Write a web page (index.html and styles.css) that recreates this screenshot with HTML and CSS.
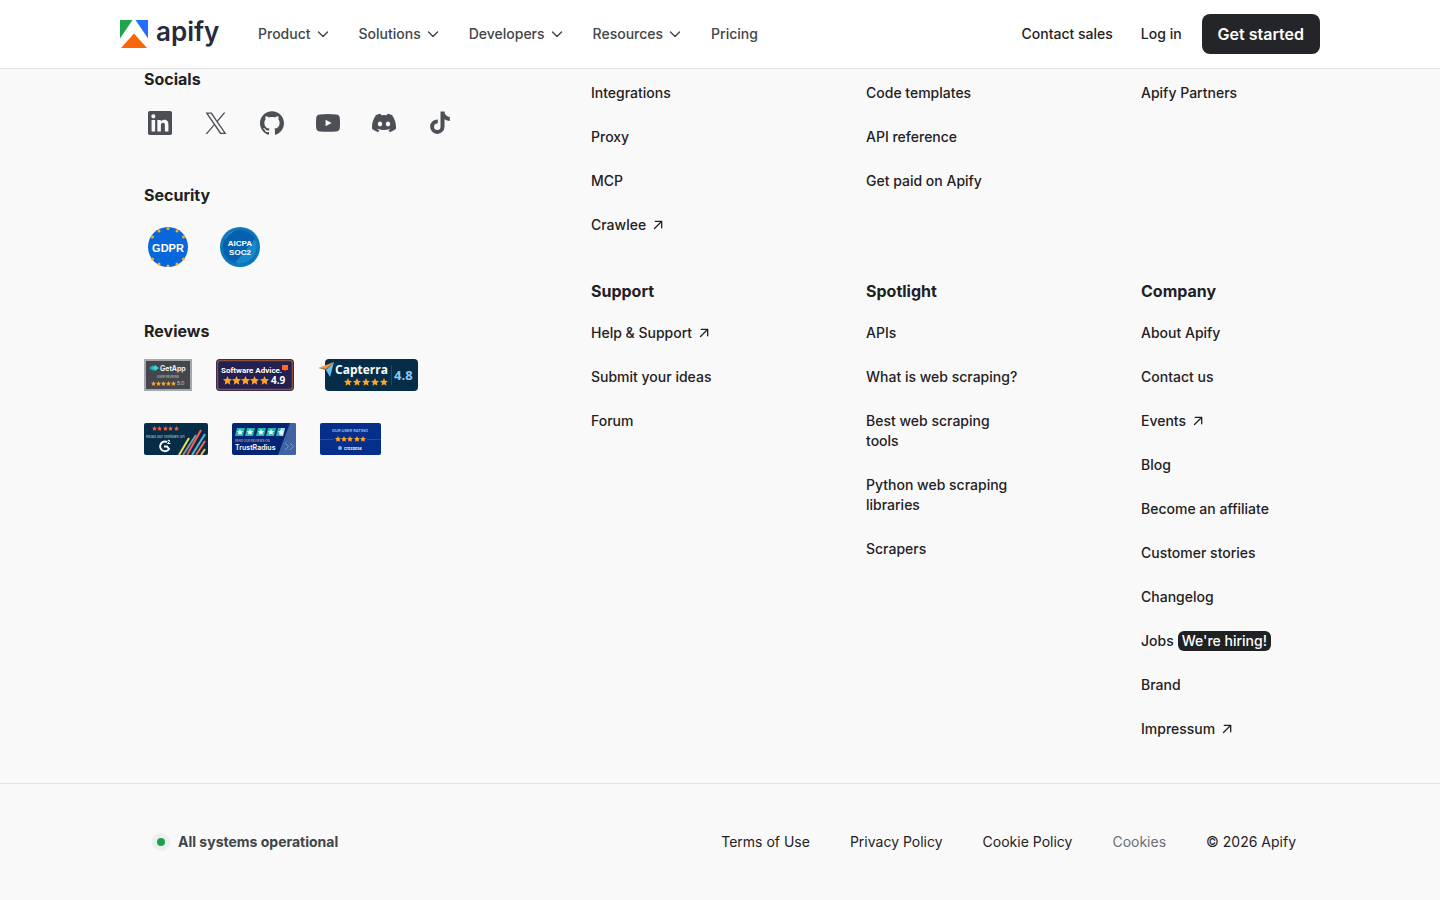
FILE: index.html
```html
<!DOCTYPE html>
<html lang="en">
<head>
<meta charset="utf-8">
<meta name="viewport" content="width=device-width, initial-scale=1">
<title>Apify</title>
<link rel="stylesheet" href="styles.css">
</head>
<body>
<svg class="sprite" aria-hidden="true">
  <symbol id="chevron" viewBox="0 0 20 20"><path d="M5.5 8l4.5 4.5L14.500 8" fill="none" stroke="currentColor" stroke-width="1.400" stroke-linecap="round" stroke-linejoin="round"/></symbol>
  <symbol id="arrow" viewBox="0 0 16 16"><path d="M4.500 11.500l7-7M5.200 4.300h6.500v6.500" fill="none" stroke="currentColor" stroke-width="1.300" stroke-linecap="round" stroke-linejoin="round"/></symbol>
  <symbol id="star" viewBox="0 0 10 10"><path d="M5 0l1.500 3.300 3.500.4-2.600 2.400.7 3.600L5 7.900 1.900 9.700l.7-3.600L0 3.700l3.500-.4z"/></symbol>
</svg>

<header class="header">
  <div class="header-inner">
    <a class="logo" href="#">
      <svg class="logo-mark" viewBox="0 0 28 28" aria-hidden="true"><path d="M0 0h12.500L0 18.500z" fill="#20a34e"/><path d="M15.500 0H28v18.500z" fill="#246dff"/><path d="M1 28l13-14.500L27 28z" fill="#f86606"/></svg>
      <span class="logo-text">apify</span>
    </a>
    <nav class="nav" aria-label="Main">
      <button class="nav-item" type="button">Product<svg class="chevron" aria-hidden="true"><use href="#chevron"/></svg></button>
      <button class="nav-item" type="button">Solutions<svg class="chevron" aria-hidden="true"><use href="#chevron"/></svg></button>
      <button class="nav-item" type="button">Developers<svg class="chevron" aria-hidden="true"><use href="#chevron"/></svg></button>
      <button class="nav-item" type="button">Resources<svg class="chevron" aria-hidden="true"><use href="#chevron"/></svg></button>
      <a class="nav-item" href="#">Pricing</a>
    </nav>
    <div class="account">
      <a class="account-link" href="#">Contact sales</a>
      <a class="account-link" href="#">Log in</a>
      <a class="cta" href="#">Get started</a>
    </div>
  </div>
</header>

<footer class="footer">
  <div class="footer-main">
    <div class="about">
      <section class="about-block">
        <h2 class="heading">Socials</h2>
        <div class="socials">
          <a class="social" href="#" aria-label="LinkedIn"><svg viewBox="0 0 24 24"><path d="M20.447 20.452h-3.554v-5.569c0-1.328-.027-3.037-1.852-3.037-1.853 0-2.136 1.445-2.136 2.939v5.667H9.351V9h3.414v1.561h.046c.477-.9 1.637-1.850 3.370-1.850 3.601 0 4.267 2.370 4.267 5.455v6.286zM5.337 7.433a2.062 2.062 0 0 1-2.063-2.065 2.064 2.064 0 1 1 2.063 2.065zm1.782 13.019H3.555V9h3.564v11.452zM22.225 0H1.771C.792 0 0 .774 0 1.729v20.542C0 23.227.792 24 1.771 24h20.451C23.200 24 24 23.227 24 22.271V1.729C24 .774 23.200 0 22.222 0h.003z"/></svg></a>
          <a class="social" href="#" aria-label="X"><svg viewBox="0 0 24 24"><path fill-rule="evenodd" d="M13.900 10.500L21.500 1.500h-1.700l-6.700 7.900-5.300-7.900H1.500l8.200 12-8.200 9.500h1.700l7.200-8.400 5.700 8.400h6.300zM4 2.800h2.900L20 21.700h-2.900z"/></svg></a>
          <a class="social" href="#" aria-label="GitHub"><svg viewBox="0 0 24 24"><path d="M12 .297c-6.630 0-12 5.373-12 12 0 5.303 3.438 9.800 8.205 11.385.6.113.82-.258.82-.577 0-.285-.010-1.040-.015-2.040-3.338.724-4.042-1.610-4.042-1.610C4.422 18.070 3.633 17.700 3.633 17.700c-1.087-.744.084-.729.084-.729 1.205.084 1.838 1.236 1.838 1.236 1.070 1.835 2.809 1.305 3.495.998.108-.776.417-1.305.76-1.605-2.665-.3-5.466-1.332-5.466-5.930 0-1.310.465-2.380 1.235-3.220-.135-.303-.54-1.523.105-3.176 0 0 1.005-.322 3.300 1.230.96-.267 1.980-.399 3-.405 1.020.006 2.040.138 3 .405 2.280-1.552 3.285-1.230 3.285-1.230.645 1.653.24 2.873.12 3.176.765.84 1.230 1.910 1.230 3.220 0 4.610-2.805 5.625-5.475 5.920.42.36.81 1.096.81 2.220 0 1.606-.015 2.896-.015 3.286 0 .315.210.69.825.57C20.565 22.092 24 17.592 24 12.297c0-6.627-5.373-12-12-12"/></svg></a>
          <a class="social" href="#" aria-label="YouTube"><svg viewBox="0 0 24 24"><path fill-rule="evenodd" d="M4 3.400Q12 2.800 20 3.400 23.600 3.700 23.800 7q.4 5 0 10-.3 3.200-3.800 3.500-8 .6-16 0Q.5 20.200.2 17q-.4-5 0-10Q.4 3.700 4 3.400zM9.600 8.700v6.600l6-3.300z"/></svg></a>
          <a class="social" href="#" aria-label="Discord"><svg viewBox="0 0 24 24"><path d="M20.317 4.370a19.791 19.791 0 0 0-4.885-1.515.074.074 0 0 0-.079.037c-.210.375-.444.864-.608 1.250a18.270 18.270 0 0 0-5.487 0 12.640 12.640 0 0 0-.617-1.250.077.077 0 0 0-.079-.037A19.736 19.736 0 0 0 3.677 4.370a.07.07 0 0 0-.032.027C.533 9.046-.32 13.580.099 18.058a.082.082 0 0 0 .031.057 19.900 19.900 0 0 0 5.993 3.030.078.078 0 0 0 .084-.028c.462-.63.874-1.295 1.226-1.994a.076.076 0 0 0-.041-.106 13.107 13.107 0 0 1-1.872-.892.077.077 0 0 1-.008-.128c.126-.094.252-.192.372-.292a.074.074 0 0 1 .077-.010c3.928 1.793 8.180 1.793 12.062 0a.074.074 0 0 1 .078.010c.12.099.246.198.373.292a.077.077 0 0 1-.006.127 12.299 12.299 0 0 1-1.873.892.077.077 0 0 0-.041.107c.36.698.772 1.362 1.225 1.993a.076.076 0 0 0 .084.028 19.839 19.839 0 0 0 6.002-3.030.077.077 0 0 0 .032-.054c.5-5.177-.838-9.674-3.549-13.660a.061.061 0 0 0-.031-.030zM8.020 15.330c-1.183 0-2.157-1.085-2.157-2.419s.956-2.419 2.157-2.419c1.210 0 2.176 1.096 2.157 2.420 0 1.333-.956 2.418-2.157 2.418zm7.975 0c-1.183 0-2.157-1.085-2.157-2.419s.955-2.419 2.157-2.419c1.210 0 2.176 1.096 2.157 2.420 0 1.333-.946 2.418-2.157 2.418z"/></svg></a>
          <a class="social" href="#" aria-label="TikTok"><svg viewBox="0 0 24 24"><path d="M16.500.5h-4v15.300a3.200 3.200 0 1 1-2.700-3.200V8.500a7.200 7.200 0 1 0 6.700 7.200V8.200A9.300 9.300 0 0 0 21.800 9.900V5.900A5.400 5.400 0 0 1 16.500.5z"/></svg></a>
        </div>
      </section>

      <section class="about-block">
        <h2 class="heading">Security</h2>
        <div class="seals">
          <svg class="seal" viewBox="0 0 40 40" role="img" aria-label="GDPR">
            <circle cx="20" cy="20" r="20" fill="#0967dc"/>
            <g fill="#f5ae25"><circle cx="20" cy="1.500" r="1.500"/><circle cx="11" cy="4" r="1.500"/><circle cx="29" cy="4" r="1.500"/><circle cx="4.500" cy="10" r="1.500"/><circle cx="35.500" cy="10" r="1.500"/><circle cx="4.500" cy="32" r="1.500"/><circle cx="35.500" cy="32" r="1.500"/><circle cx="11" cy="37" r="1.500"/><circle cx="29" cy="37" r="1.500"/><circle cx="20" cy="39" r="1.500"/></g>
            <text class="seal-gdpr" x="20" y="25">GDPR</text>
          </svg>
          <svg class="seal" viewBox="0 0 40 40" role="img" aria-label="AICPA SOC2">
            <circle cx="20" cy="20" r="20" fill="#0879bc"/><circle cx="20" cy="20" r="17" fill="#0561ae"/>
            <path d="M15 36L35 12a17 17 0 0 1-20 24z" fill="#1787c8"/>
            <path d="M5 12A17 17 0 0 1 13 4.500" fill="none" stroke="#3597d0"/>
            <text class="seal-soc" x="20" y="19">AICPA</text><text class="seal-soc" x="20" y="28">SOC2</text>
          </svg>
        </div>
      </section>

      <section class="about-block">
        <h2 class="heading">Reviews</h2>
        <div class="reviews">
          <a href="#" aria-label="GetApp"><svg class="review" width="48" height="32" viewBox="0 0 48 32">
            <rect x="1" y="1" width="46" height="30" fill="#43474d" stroke="#a5a7aa" stroke-width="2"/>
            <path d="M5 9l4-3v6z" fill="#1fa7b8"/><path d="M8 9l3-3 4 3-4 3z" fill="#36d1d2"/>
            <text class="badge-bold" x="16" y="12" font-size="7">GetApp</text>
            <text class="badge-soft" x="24" y="19" font-size="3" text-anchor="middle">USER REVIEWS</text>
            <g fill="#fba52a"><use href="#star" x="7" y="22" width="5" height="5"/><use href="#star" x="12" y="22" width="5" height="5"/><use href="#star" x="17" y="22" width="5" height="5"/><use href="#star" x="22" y="22" width="5" height="5"/><use href="#star" x="27" y="22" width="5" height="5"/></g>
            <text class="badge-soft" x="33" y="26" font-size="5">5.0</text>
          </svg></a>
          <a href="#" aria-label="Software Advice"><svg class="review" width="78" height="32" viewBox="0 0 78 32">
            <rect width="78" height="32" rx="4" fill="#24204f"/><rect x="1.500" y="1.500" width="75" height="29" rx="3" fill="none" stroke="#88513d" stroke-width="1.500"/>
            <text class="badge-roboto" x="5" y="14" font-size="8">Software Advice.</text>
            <path d="M66 6h6v5h-2l-1 1-1-1h-2z" fill="#ff681d"/>
            <g fill="#fba52a"><use href="#star" x="7" y="17" width="9" height="9"/><use href="#star" x="16" y="17" width="9" height="9"/><use href="#star" x="25" y="17" width="9" height="9"/><use href="#star" x="34" y="17" width="9" height="9"/><use href="#star" x="44" y="17" width="9" height="9"/></g>
            <text class="badge-open" x="55" y="25" font-size="10">4.9</text>
          </svg></a>
          <a href="#" aria-label="Capterra"><svg class="review" width="100" height="32" viewBox="0 0 100 32">
            <rect x="7" width="93" height="32" rx="4" fill="#062d47"/>
            <path d="M0 9l16-6-8 8z" fill="#f7953e"/><path d="M1 9l7 1 8-7-7 8z" fill="#243b51"/><path d="M16 3l-4 15-4-7z" fill="#66c1ed"/>
            <text class="badge-open" x="17" y="15" font-size="12">Capterra</text>
            <g fill="#fba52a"><use href="#star" x="26" y="19" width="8" height="8"/><use href="#star" x="35" y="19" width="8" height="8"/><use href="#star" x="44" y="19" width="8" height="8"/><use href="#star" x="53" y="19" width="8" height="8"/><use href="#star" x="62" y="19" width="8" height="8"/></g>
            <path d="M73.500 6v20" stroke="#184b6a"/>
            <text class="badge-open" x="76" y="21" font-size="13" fill="#70c1f2">4.8</text>
          </svg></a>
        </div>
        <div class="reviews">
          <a href="#" aria-label="G2"><svg class="review" width="64" height="32" viewBox="0 0 64 32">
            <clipPath id="g2-clip"><rect width="64" height="32" rx="2"/></clipPath>
            <g clip-path="url(#g2-clip)"><rect width="64" height="32" fill="#062d47"/>
            <path d="M35 32l10-17" stroke="#f6df4d" stroke-width="2"/><path d="M39 32l13-20" stroke="#7e9aa9" stroke-width="2"/><path d="M43 32L57 7" stroke="#ff5c4b" stroke-width="2"/><path d="M48 32l13-21" stroke="#63b4db" stroke-width="2"/><path d="M52 32l9-14" stroke="#ff6849" stroke-width="2"/><path d="M57 32l4-6" stroke="#f6c54d" stroke-width="2"/></g>
            <g fill="#ff5c38"><use href="#star" x="8" y="3" width="5" height="5"/><use href="#star" x="13" y="3" width="5" height="5"/><use href="#star" x="19" y="3" width="5" height="5"/><use href="#star" x="24" y="3" width="5" height="5"/><use href="#star" x="30" y="3" width="5" height="5"/></g>
            <text class="badge-soft" x="2" y="15" font-size="4">Read our reviews on</text>
            <path d="M23 19a4.800 4.800 0 1 0 2 7l-2-2.500h-3" fill="none" stroke="#fff" stroke-width="2"/><path d="M23.500 18q2-2 2 0 0 1-2 2.500h3" fill="none" stroke="#fff"/>
          </svg></a>
          <a href="#" aria-label="TrustRadius"><svg class="review" width="64" height="32" viewBox="0 0 64 32">
            <rect width="64" height="32" rx="2" fill="#052474"/><path d="M58 0h4q2 0 2 2v28q0 2-2 2H46z" fill="#4263a2"/>
            <g fill="#23b9a6"><path d="M5 5h8l-2 8H3zM15 5h8l-2 8h-8zM26 5h8l-2 8h-8zM36 5h8l-2 8h-8zM46 5h7l-2 8h-7z"/></g><path d="M49 5h4l-2 8h-3z" fill="#b8d2e8"/>
            <g fill="#fff"><use href="#star" x="5" y="6" width="6" height="6"/><use href="#star" x="15" y="6" width="6" height="6"/><use href="#star" x="26" y="6" width="6" height="6"/><use href="#star" x="36" y="6" width="6" height="6"/><use href="#star" x="46" y="6" width="6" height="6"/></g>
            <text class="badge-soft" x="3" y="19" font-size="3">READ OUR REVIEWS ON</text>
            <text class="badge-bold" x="3" y="27" font-size="7">TrustRadius</text>
            <path d="M53 20l3.500 3.500L53 27M58 20l3.500 3.500L58 27" fill="none" stroke="#5fa1eb"/>
          </svg></a>
          <a href="#" aria-label="Crozdesk"><svg class="review" width="61" height="32" viewBox="0 0 61 32">
            <rect width="61" height="32" rx="2" fill="#062f8c"/><path d="M0 16.500h14M47 16.500h14" stroke="#164eb6"/>
            <text class="badge-bold" x="30" y="9" font-size="4" text-anchor="middle" fill="#b9d1f7">OUR USER RATING</text>
            <g fill="#fba52a"><use href="#star" x="15" y="13" width="6" height="6"/><use href="#star" x="21" y="13" width="6" height="6"/><use href="#star" x="27" y="13" width="6" height="6"/><use href="#star" x="34" y="13" width="6" height="6"/><use href="#star" x="40" y="13" width="6" height="6"/></g>
            <circle cx="20" cy="25" r="2" fill="#72c1ff"/><text class="badge-bold" x="24" y="27" font-size="4">crozdesk</text>
          </svg></a>
        </div>
      </section>
    </div>

    <nav class="columns" aria-label="Footer">
      <ul class="links">
        <li><a href="#">Integrations</a></li>
        <li><a href="#">Proxy</a></li>
        <li><a href="#">MCP</a></li>
        <li><a href="#">Crawlee<svg class="arrow" aria-hidden="true"><use href="#arrow"/></svg></a></li>
      </ul>
      <ul class="links">
        <li><a href="#">Code templates</a></li>
        <li><a href="#">API reference</a></li>
        <li><a href="#">Get paid on Apify</a></li>
      </ul>
      <ul class="links">
        <li><a href="#">Apify Partners</a></li>
      </ul>
      <section class="group">
        <h2 class="heading">Support</h2>
        <ul class="links">
          <li><a href="#">Help &amp; Support<svg class="arrow" aria-hidden="true"><use href="#arrow"/></svg></a></li>
          <li><a href="#">Submit your ideas</a></li>
          <li><a href="#">Forum</a></li>
        </ul>
      </section>
      <section class="group">
        <h2 class="heading">Spotlight</h2>
        <ul class="links">
          <li><a href="#">APIs</a></li>
          <li><a href="#">What is web scraping?</a></li>
          <li><a href="#">Best web scraping tools</a></li>
          <li><a href="#">Python web scraping libraries</a></li>
          <li><a href="#">Scrapers</a></li>
        </ul>
      </section>
      <section class="group">
        <h2 class="heading">Company</h2>
        <ul class="links">
          <li><a href="#">About Apify</a></li>
          <li><a href="#">Contact us</a></li>
          <li><a href="#">Events<svg class="arrow" aria-hidden="true"><use href="#arrow"/></svg></a></li>
          <li><a href="#">Blog</a></li>
          <li><a href="#">Become an affiliate</a></li>
          <li><a href="#">Customer stories</a></li>
          <li><a href="#">Changelog</a></li>
          <li><a class="jobs" href="#">Jobs<span class="tag">We're hiring!</span></a></li>
          <li><a href="#">Brand</a></li>
          <li><a href="#">Impressum<svg class="arrow" aria-hidden="true"><use href="#arrow"/></svg></a></li>
        </ul>
      </section>
    </nav>
  </div>

  <div class="legal">
    <div class="legal-inner">
      <a class="status" href="#"><span class="status-dot"></span>All systems operational</a>
      <div class="legal-links">
        <a href="#">Terms of Use</a>
        <a href="#">Privacy Policy</a>
        <a href="#">Cookie Policy</a>
        <button class="cookies" type="button">Cookies</button>
        <span>© 2026 Apify</span>
      </div>
    </div>
  </div>
</footer>
</body>
</html>
```
FILE: styles.css
```css
* { box-sizing: border-box; }
body {
  margin: 0;
  background: #f9f9f9;
  color: #1f2123;
  font: 500 14px/20px Inter, "Liberation Sans", sans-serif;
}
a { color: inherit; text-decoration: none; }
button { padding: 0; border: 0; background: none; color: inherit; font: inherit; cursor: pointer; }
.sprite { display: block; width: 0; height: 0; }

.header { position: sticky; top: 0; background: #fff; border-bottom: 1px solid #e2e3e5; }
.header-inner {
  display: flex;
  align-items: center;
  max-width: 1200px;
  margin: 0 auto;
  padding: 14px 0;
}
.logo { display: flex; align-items: flex-start; gap: 8px; width: 138px; }
.logo-mark { width: 28px; height: 28px; }
.logo-text { color: #272a3a; font-size: 26px; font-weight: 600; line-height: 24px; }
.nav { display: flex; gap: 26px; color: #414549; }
.nav-item { display: flex; align-items: center; gap: 2px; }
.chevron { width: 20px; height: 20px; }
.account { display: flex; align-items: center; gap: 28px; margin-left: auto; }
.cta {
  margin-left: -8px;
  padding: 10px 16px;
  border-radius: 8px;
  background: #242529;
  color: #fff;
  font-size: 16px;
  font-weight: 600;
}

.footer-main {
  display: grid;
  grid-template-columns: minmax(0, 1fr) minmax(0, 705px);
  max-width: 1152px;
  margin: 0 auto;
  padding-bottom: 44px;
}
.heading { margin: 0; font-size: 16px; font-weight: 700; line-height: 20px; }
.about { display: flex; flex-direction: column; gap: 46px; }
.socials { display: flex; gap: 24px; margin-top: 18px; color: #4c5056; }
.social { padding: 4px; }
.social svg { display: block; width: 24px; height: 24px; fill: currentColor; }
.seals { display: flex; gap: 32px; padding: 22px 4px 8px; }
.seal { width: 40px; height: 40px; }
.seal text { fill: #fff; font-family: "Liberation Sans", sans-serif; font-weight: 700; text-anchor: middle; }
.seal-gdpr { font-size: 11px; }
.seal-soc { font-size: 8px; }
.reviews { display: flex; gap: 24px; margin-top: 18px; }
.reviews + .reviews { margin-top: 32px; }
.review { display: block; }
.review text { fill: #fff; }
.review text[fill] { fill: #8cc8f2; }
.badge-bold { font-family: Inter, sans-serif; font-weight: 600; }
.badge-open { font-family: "Open Sans", sans-serif; font-weight: 700; }
.badge-roboto { font-family: Roboto, sans-serif; font-weight: 700; }
.badge-soft { font-family: Inter, sans-serif; font-weight: 400; opacity: 0.7; }

.columns {
  display: grid;
  grid-template-columns: repeat(3, minmax(0, 1fr));
  gap: 46px 120px;
  padding-top: 14px;
}
.links { display: flex; flex-direction: column; gap: 24px; margin: 0; padding: 0; list-style: none; }
.links a { display: block; }
.group .links { margin-top: 22px; }
.arrow { width: 16px; height: 16px; margin-left: 4px; vertical-align: -3px; }
.links .jobs { display: flex; gap: 4px; white-space: nowrap; }
.tag { padding: 0 4px; border-radius: 6px; background: #1f2123; color: #fff; }

.legal { border-top: 1px solid #e2e3e5; }
.legal-inner {
  display: flex;
  align-items: center;
  justify-content: space-between;
  max-width: 1152px;
  margin: 0 auto;
  padding: 48px 0;
}
.status { display: flex; align-items: center; gap: 8px; padding-left: 8px; color: #414549; font-weight: 700; }
.status-dot { width: 18px; height: 18px; border: 5px solid #ebeff0; border-radius: 50%; background: #18a348; }
.legal-links { display: flex; gap: 40px; font-weight: 400; }
.cookies { color: #6b6f76; }
```
